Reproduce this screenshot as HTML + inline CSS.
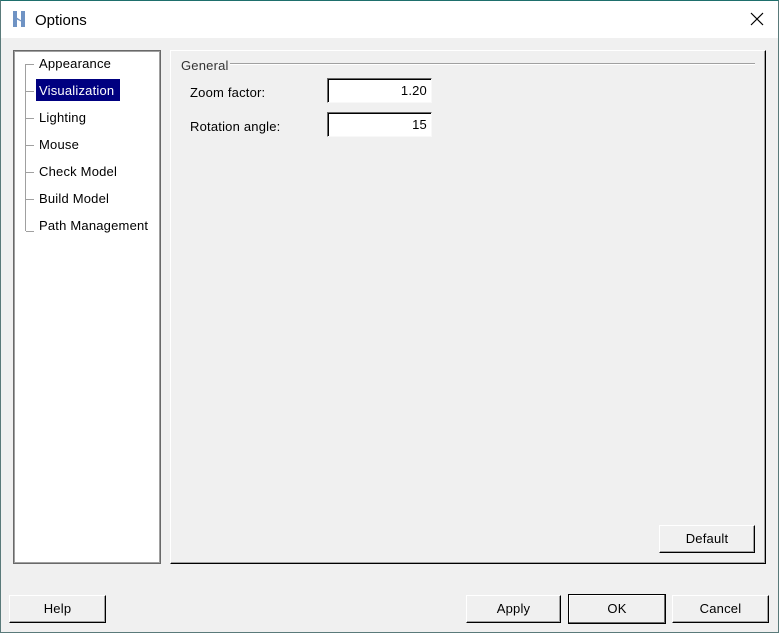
<!DOCTYPE html>
<html><head><style>
*{margin:0;padding:0;box-sizing:border-box}
body{width:779px;height:633px;position:relative;background:#f0f0f0;font-family:"Liberation Sans",sans-serif;font-size:13px;letter-spacing:0.2px;color:#000;overflow:hidden}
.a{position:absolute}
.title{left:0;top:0;width:779px;height:38px;background:#fff;border-top:1px solid #1e6f6c}
.frame{left:0;top:0;width:779px;height:633px;border:1px solid #5a7a7a;border-top-color:#1e6f6c}
.btn{position:absolute;border-top:1px solid #fff;border-left:1px solid #fff;border-right:1px solid #000;border-bottom:1px solid #000;box-shadow:inset -1px -1px 0 #a0a0a0;text-align:center;line-height:26px;font-size:13px;background:#f0f0f0}
.inp{position:absolute;background:#fff;border-top:1px solid #696969;border-left:1px solid #696969;box-shadow:inset 1px 1px 0 #000;text-align:right;padding-right:4px;line-height:24px;width:105px;height:25px;border-right:1px solid #f8f8f8;border-bottom:1px solid #f8f8f8}
.ti{position:absolute;left:39px}
.h{position:absolute;left:26px;width:8px;height:1px;background:#a0a0a0}
</style></head><body>
<div class="a title"></div>
<svg class="a" style="left:11px;top:10px" width="16" height="18" viewBox="0 0 16 18"><path d="M2 1h4v16H2zM10 1h4v16h-4zM5 7l6 4v1L5 9z" fill="#6f93c4"/></svg>
<div class="a" style="left:35px;top:12px;font-size:15px;letter-spacing:0">Options</div>
<svg class="a" style="left:749px;top:11px" width="16" height="16"><path d="M2 2L14 14M14 2L2 14" stroke="#000" stroke-width="1.2"/></svg>
<div class="a frame"></div>

<div class="a" style="left:13px;top:50px;width:148px;height:514px;background:#fff;border:1px solid #696969;box-shadow:0 0 0 1px #a0a0a0 inset"></div>
<div class="a" style="left:25px;top:64px;width:1px;height:167px;background:#a0a0a0"></div>
<div class="h" style="top:64px"></div><div class="h" style="top:91px"></div><div class="h" style="top:118px"></div><div class="h" style="top:145px"></div><div class="h" style="top:172px"></div><div class="h" style="top:199px"></div><div class="h" style="top:231px"></div>
<div class="a" style="left:36px;top:79px;width:84px;height:22px;background:#000080"></div>
<div class="ti" style="top:56px">Appearance</div>
<div class="ti" style="top:83px;color:#fff">Visualization</div>
<div class="ti" style="top:110px">Lighting</div>
<div class="ti" style="top:137px">Mouse</div>
<div class="ti" style="top:164px">Check Model</div>
<div class="ti" style="top:191px">Build Model</div>
<div class="ti" style="top:218px">Path Management</div>

<div class="a" style="left:170px;top:50px;width:596px;height:514px;border-top:1px solid #fff;border-left:1px solid #fff;border-right:1px solid #000;border-bottom:1px solid #000;box-shadow:inset -1px -1px 0 #a0a0a0"></div>
<div class="a" style="left:230px;top:63px;width:525px;height:2px;border-top:1px solid #a0a0a0;border-bottom:1px solid #fff"></div>
<div class="a" style="left:181px;top:58px;color:#333">General</div>
<div class="a" style="left:190px;top:85px">Zoom factor:</div>
<div class="a" style="left:190px;top:119px">Rotation angle:</div>
<div class="inp" style="left:327px;top:78px">1.20</div>
<div class="inp" style="left:327px;top:112px">15</div>
<div class="btn" style="left:659px;top:525px;width:96px;height:28px">Default</div>

<div class="btn" style="left:9px;top:595px;width:97px;height:28px">Help</div>
<div class="btn" style="left:466px;top:595px;width:95px;height:28px">Apply</div>
<div class="btn" style="left:568px;top:594px;width:98px;height:30px;line-height:27px;border:1px solid #000;box-shadow:inset -1px -1px 0 #696969,inset 1px 1px 0 #fff">OK</div>
<div class="btn" style="left:672px;top:595px;width:97px;height:28px">Cancel</div>
</body></html>
